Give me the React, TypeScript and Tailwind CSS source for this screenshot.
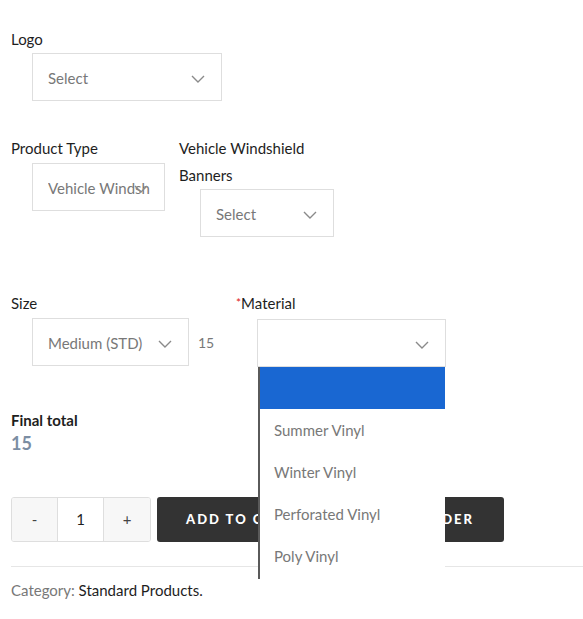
import React from "react";

function Chevron({ className = "" }: { className?: string }) {
  return (
    <svg width="14" height="8" viewBox="0 0 14 8" className={className} fill="none">
      <path d="M1 1l6 6 6-6" stroke="#8a8a8a" strokeWidth="1.4" />
    </svg>
  );
}

function Select({ value, width }: { value?: string; width: string }) {
  return (
    <div className={`relative ml-[21px] flex h-[48px] items-center border border-[#dedede] bg-white pl-[15px] pr-[14px] pt-[2px] ${width}`}>
      <span className="block min-w-0 flex-1 overflow-hidden whitespace-nowrap text-[15px] text-[#787878]">
        {value}
      </span>
      <Chevron className="absolute right-[16px] top-[21px]" />
    </div>
  );
}

const options = ["Summer Vinyl", "Winter Vinyl", "Perforated Vinyl", "Poly Vinyl"];

export default function App() {
  return (
    <div
      className="relative h-[619px] w-[583px] overflow-hidden bg-white pl-[11px] text-[#1e1e1e]"
      style={{ fontFamily: "Lato, 'Liberation Sans', sans-serif" }}
    >
      {/* Logo */}
      <div className="pt-[26px]">
        <div className="text-[15px] leading-[27px]">Logo</div>
        <Select value="Select" width="w-[190px]" />
      </div>

      {/* Product type row */}
      <div className="mt-[34px] flex items-start">
        <div className="mr-[14px] w-[154px]">
          <div className="mb-[1px] text-[15px] leading-[27px]">Product Type</div>
          <Select value="Vehicle Windshield" width="w-[133px]" />
        </div>
        <div className="w-[150px]">
          <div className="text-[15px] leading-[27px]">Vehicle Windshield Banners</div>
          <Select value="Select" width="w-[134px]" />
        </div>
      </div>

      {/* Size / Material row */}
      <div className="mt-[53px] flex items-start">
        <div className="w-[225px]">
          <div className="mb-[1px] text-[15px] leading-[27px]">Size</div>
          <div className="flex items-center">
            <Select value="Medium (STD)" width="w-[157px]" />
            <span className="ml-[9px] text-[14px] text-[#787878]">15</span>
          </div>
        </div>
        <div className="relative w-[230px]">
          <div className="mb-[1px] text-[15px] leading-[27px]">
            <span className="relative top-[-2px] text-[12px] text-[#e02020]">*</span>Material
          </div>
          <Select value="" width="w-[189px]" />
          {/* open dropdown */}
          <div className="absolute left-[22px] top-[77px] z-10 h-[212px] w-[187px] border-l-2 border-[#5a5a5a] bg-white">
            <div className="h-[42px] bg-[#1967d2]" />
            {options.map((o) => (
              <div key={o} className="flex h-[42px] items-center pl-[14px] text-[15px] text-[#787878]">
                {o}
              </div>
            ))}
          </div>
        </div>
      </div>

      {/* Final total */}
      <div className="mt-[40px]">
        <div className="text-[15px] font-bold leading-[27px]">Final total</div>
        <div className="text-[18px] font-bold leading-[18px] text-[#7b8ea3]">15</div>
      </div>

      {/* Cart row */}
      <div className="mt-[45px] flex items-center gap-[6px]">
        <div className="flex h-[45px] overflow-hidden rounded-[3px] border border-[#dedede]">
          <button className="w-[45px] bg-[#f7f7f7] text-[15px] text-[#444]">-</button>
          <div className="flex w-[47px] items-center justify-center border-x border-[#dedede] bg-white text-[15px]">1</div>
          <button className="w-[46px] bg-[#f7f7f7] text-[15px] text-[#444]">+</button>
        </div>
        <button className="h-[45px] w-[170px] rounded-[3px] bg-[#333333] pl-[29px] text-left text-[13px] font-black tracking-[2px] text-white">
          ADD TO CART
        </button>
        <button className="h-[45px] w-[171px] rounded-[3px] bg-[#333333] pr-[30px] text-right text-[13px] font-black tracking-[2px] text-white">
          BULK ORDER
        </button>
      </div>

      <div className="mt-[24px] border-t border-[#e6e6e6]" />

      <div className="mt-[11px] text-[15px] leading-[24px]">
        <span className="text-[#787878]">Category: </span>
        <span className="text-[#1e1e1e]">Standard Products</span>.
      </div>
    </div>
  );
}
